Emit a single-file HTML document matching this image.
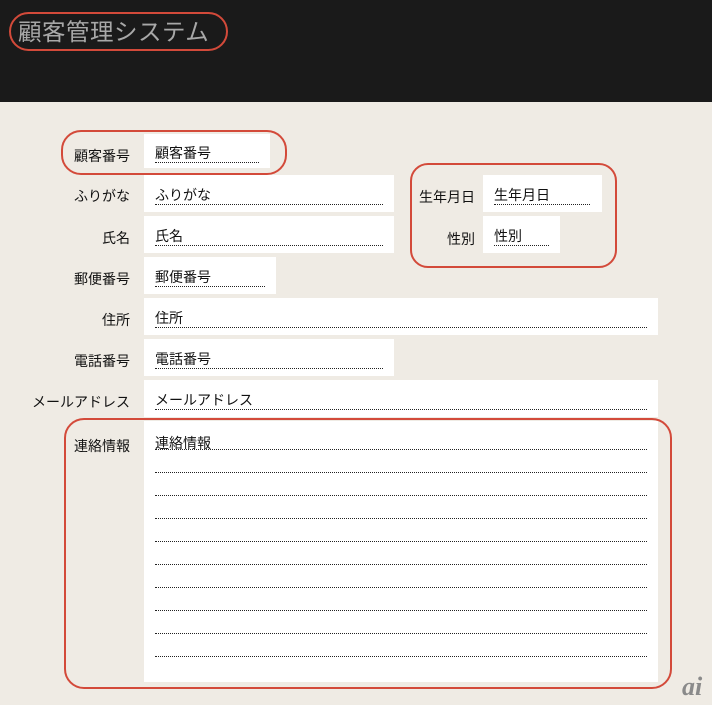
<!DOCTYPE html>
<html><head><meta charset="utf-8"><style>
*{margin:0;padding:0;box-sizing:border-box}
body{width:712px;height:705px;background:#efebe4;position:relative;overflow:hidden;font-family:"Liberation Sans","Noto Sans CJK JP",sans-serif;font-size:14px;color:#111}
.hdr{position:absolute;left:0;top:0;width:712px;height:102px;background:#1a1a1a}
.title{position:absolute;left:18px;top:13px;font-size:23.5px;color:#a8a8a8;letter-spacing:0.5px}
.lbl{position:absolute;text-align:right;width:130px;left:0}
.box{position:absolute;background:#fff}
.ul{position:absolute;left:11px;top:11px;line-height:18px;border-bottom:1px dotted #222;height:19px}
.red{position:absolute;border:2px solid #d34a3a}
.nl{position:absolute;left:11px;right:11px;border-bottom:1px dotted #222;height:0}
.ai{position:absolute;left:682px;top:672px;font:italic bold 26px "Liberation Serif",serif;color:#8a8a8a}
</style></head><body>
<div class="hdr"></div>
<div class="title">顧客管理システム</div>
<div class="red" style="left:9px;top:12px;width:219px;height:39px;border-radius:20px"></div>

<div class="lbl" style="top:146px">顧客番号</div>
<div class="box" style="left:144px;top:134px;width:126px;height:34px"><div class="ul" style="width:104px;top:10px">顧客番号</div></div>
<div class="red" style="left:61px;top:130px;width:226px;height:45px;border-radius:20px"></div>

<div class="lbl" style="top:186px">ふりがな</div>
<div class="box" style="left:144px;top:175px;width:250px;height:37px"><div class="ul" style="width:228px">ふりがな</div></div>

<div class="lbl" style="top:228px">氏名</div>
<div class="box" style="left:144px;top:216px;width:250px;height:37px"><div class="ul" style="width:228px">氏名</div></div>

<div class="lbl" style="top:269px">郵便番号</div>
<div class="box" style="left:144px;top:257px;width:132px;height:37px"><div class="ul" style="width:110px">郵便番号</div></div>

<div class="lbl" style="top:310px">住所</div>
<div class="box" style="left:144px;top:298px;width:514px;height:37px"><div class="ul" style="width:492px">住所</div></div>

<div class="lbl" style="top:351px">電話番号</div>
<div class="box" style="left:144px;top:339px;width:250px;height:37px"><div class="ul" style="width:228px">電話番号</div></div>

<div class="lbl" style="top:392px">メールアドレス</div>
<div class="box" style="left:144px;top:380px;width:514px;height:37px"><div class="ul" style="width:492px">メールアドレス</div></div>

<div class="lbl" style="top:187px;left:345px">生年月日</div>
<div class="box" style="left:483px;top:175px;width:119px;height:37px"><div class="ul" style="width:96px">生年月日</div></div>
<div class="lbl" style="top:229px;left:345px">性別</div>
<div class="box" style="left:483px;top:216px;width:77px;height:37px"><div class="ul" style="width:55px">性別</div></div>
<div class="red" style="left:410px;top:163px;width:207px;height:105px;border-radius:18px"></div>

<div class="lbl" style="top:436px">連絡情報</div>
<div class="box" style="left:144px;top:421px;width:514px;height:261px">
<div style="position:absolute;left:11px;top:13px;line-height:18px">連絡情報</div>
<div class="nl" style="top:28px"></div><div class="nl" style="top:51px"></div><div class="nl" style="top:74px"></div><div class="nl" style="top:97px"></div><div class="nl" style="top:120px"></div><div class="nl" style="top:143px"></div><div class="nl" style="top:166px"></div><div class="nl" style="top:189px"></div><div class="nl" style="top:212px"></div><div class="nl" style="top:235px"></div>
</div>
<div class="red" style="left:64px;top:418px;width:608px;height:271px;border-radius:20px"></div>
<div class="ai">ai</div>
</body></html>
